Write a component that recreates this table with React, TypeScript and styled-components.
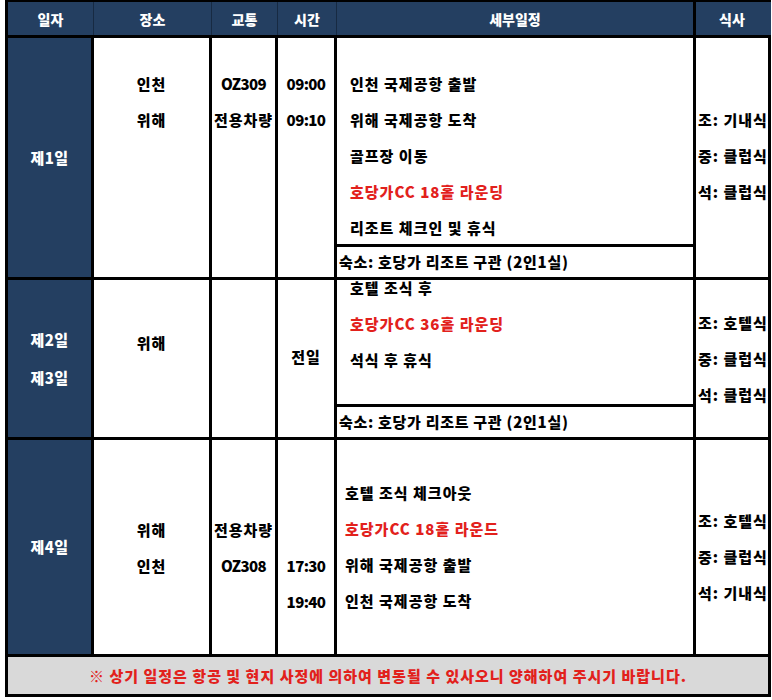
import React, { FC } from 'react';
import styled, { createGlobalStyle } from 'styled-components';

const GlobalStyle = createGlobalStyle`
    body {
        margin: 0;
        background: #fff;
        font-family: "Noto Sans CJK KR", "Noto Sans", sans-serif;
        font-weight: 900;
        font-size: 15px;
    }
`;

const NAVY = '#243f61';
const RED = '#e2211c';

const Table = styled.div`
    margin-left: 5px;
    width: 766px;
    box-sizing: border-box;
    border: 3px solid #000;
    border-top-width: 2px;
    background: #000;
    display: grid;
    grid-template-columns: 83px 115px 63px 56px 356px 72px;
    grid-template-rows: 33px 239px 157px 214px 37px;
    gap: 3px;
`;

const HeadRow = styled.div`
    grid-column: 1 / -1;
    display: flex;
    background: ${NAVY};
    margin-right: -3px;
`;

const HeadCell = styled.div<{ $w: number; $thick?: boolean }>`
    width: ${p => p.$w}px;
    flex-shrink: 0;
    box-sizing: border-box;
    border-right: ${p => (p.$thick ? '3px solid #000' : '1px solid #172a42')};
    color: #fff;
    font-size: 14px;
    display: flex;
    align-items: center;
    justify-content: center;
    &:last-child {
        border-right: none;
    }
`;

const Cell = styled.div<{ $navy?: boolean }>`
    background: ${p => (p.$navy ? NAVY : '#fff')};
    display: flex;
    flex-direction: column;
    min-height: 0;
`;

const Lines = styled.div<{ $top: number; $indent?: number; $left?: boolean }>`
    margin-top: ${p => p.$top}px;
    padding-left: ${p => p.$indent ?? 0}px;
    flex: 1 1 auto;
    min-height: 0;
    display: flex;
    flex-direction: column;
    align-items: ${p => (p.$left ? 'flex-start' : 'center')};
`;

// latin-only lines (flight numbers, times) are set tighter, like the condensed digits in the sheet
const Line = styled.div<{ $red?: boolean; $latin?: boolean }>`
    height: 36px;
    line-height: 36px;
    flex-shrink: 0;
    white-space: nowrap;
    letter-spacing: ${p => (p.$latin ? '-0.6px' : '1px')};
    color: ${p => (p.$red ? RED : '#000')};
`;

const DayLabel = styled.div`
    margin: auto 0;
    display: flex;
    flex-direction: column;
    align-items: center;
    color: #fff;
    line-height: 38px;
    letter-spacing: 0.5px;
`;

const StayBox = styled.div`
    flex: 0 0 33px;
    box-sizing: border-box;
    border-top: 3px solid #000;
    background: #fff;
    padding-left: 2px;
    line-height: 30px;
    letter-spacing: 0.7px;
    color: #000;
    white-space: nowrap;
`;

const Footer = styled.div`
    grid-column: 1 / -1;
    background: #d9d9d9;
    color: ${RED};
    text-align: center;
    line-height: 37px;
    letter-spacing: 1px;
    white-space: nowrap;
`;

type Item = { text: string; red?: boolean };
type Col = { top: number; lines: string[] };

type Day = {
    label: string[];
    place?: Col;
    transport?: Col;
    time?: Col;
    detail: { top: number; indent: number; items: Item[]; stay?: string };
    meals: Col;
};

const STAY = '숙소: 호당가 리조트 구관 (2인1실)';
const isLatin = (t: string) => /^[\x20-\x7e]+$/.test(t);

const days: Day[] = [
    {
        label: ['제1일'],
        place: { top: 28, lines: ['인천', '위해'] },
        transport: { top: 28, lines: ['OZ309', '전용차량'] },
        time: { top: 28, lines: ['09:00', '09:10'] },
        detail: {
            top: 28,
            indent: 13,
            items: [
                { text: '인천 국제공항 출발' },
                { text: '위해 국제공항 도착' },
                { text: '골프장 이동' },
                { text: '호당가CC 18홀 라운딩', red: true },
                { text: '리조트 체크인 및 휴식' },
            ],
            stay: STAY,
        },
        meals: { top: 64, lines: ['조: 기내식', '중: 클럽식', '석: 클럽식'] },
    },
    {
        label: ['제2일', '제3일'],
        place: { top: 45, lines: ['위해'] },
        time: { top: 59, lines: ['전일'] },
        detail: {
            top: -10,
            indent: 13,
            items: [
                { text: '호텔 조식 후' },
                { text: '호당가CC 36홀 라운딩', red: true },
                { text: '석식 후 휴식' },
            ],
            stay: STAY,
        },
        meals: { top: 25, lines: ['조: 호텔식', '중: 클럽식', '석: 클럽식'] },
    },
    {
        label: ['제4일'],
        place: { top: 72, lines: ['위해', '인천'] },
        transport: { top: 72, lines: ['전용차량', 'OZ308'] },
        time: { top: 108, lines: ['17:30', '19:40'] },
        detail: {
            top: 35,
            indent: 8,
            items: [
                { text: '호텔 조식 체크아웃' },
                { text: '호당가CC 18홀 라운드', red: true },
                { text: '위해 국제공항 출발' },
                { text: '인천 국제공항 도착' },
            ],
        },
        meals: { top: 63, lines: ['조: 호텔식', '중: 클럽식', '석: 기내식'] },
    },
];

const CenterCol: FC<{ col?: Col }> = ({ col }) => (
    <Cell>
        {col ? (
            <Lines $top={col.top}>
                {col.lines.map(t => (
                    <Line key={t} $latin={isLatin(t)}>
                        {t}
                    </Line>
                ))}
            </Lines>
        ) : null}
    </Cell>
);

const DayRow: FC<{ day: Day }> = ({ day }) => (
    <>
        <Cell $navy>
            <DayLabel>
                {day.label.map(l => (
                    <div key={l}>{l}</div>
                ))}
            </DayLabel>
        </Cell>
        <CenterCol col={day.place} />
        <CenterCol col={day.transport} />
        <CenterCol col={day.time} />
        <Cell>
            <Lines $top={day.detail.top} $indent={day.detail.indent} $left>
                {day.detail.items.map(it => (
                    <Line key={it.text} $red={it.red}>
                        {it.text}
                    </Line>
                ))}
            </Lines>
            {day.detail.stay ? <StayBox>{day.detail.stay}</StayBox> : null}
        </Cell>
        <Cell>
            <Lines $top={day.meals.top} $indent={2} $left>
                {day.meals.lines.map(t => (
                    <Line key={t}>{t}</Line>
                ))}
            </Lines>
        </Cell>
    </>
);

export default function App() {
    return (
        <>
            <GlobalStyle />
            <Table>
                <HeadRow>
                    <HeadCell $w={86}>일자</HeadCell>
                    <HeadCell $w={118}>장소</HeadCell>
                    <HeadCell $w={66}>교통</HeadCell>
                    <HeadCell $w={59}>시간</HeadCell>
                    <HeadCell $w={359} $thick>세부일정</HeadCell>
                    <HeadCell $w={72}>식사</HeadCell>
                </HeadRow>
                {days.map(d => (
                    <DayRow key={d.label[0]} day={d} />
                ))}
                <Footer>※ 상기 일정은 항공 및 현지 사정에 의하여 변동될 수 있사오니 양해하여 주시기 바랍니다.</Footer>
            </Table>
        </>
    );
}
